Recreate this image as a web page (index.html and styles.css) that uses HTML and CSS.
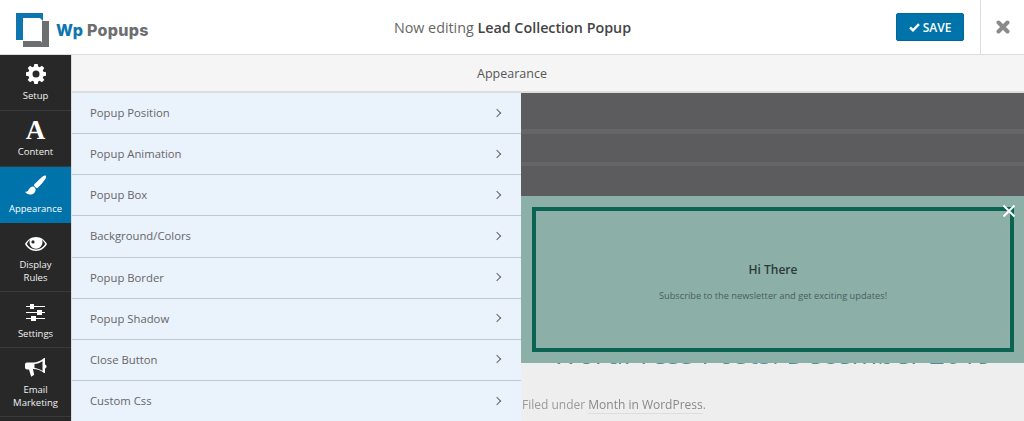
FILE: index.html
```html
<!DOCTYPE html>
<html lang="en">
<head>
<meta charset="utf-8">
<title>Wp Popups</title>
<link rel="stylesheet" href="styles.css">
</head>
<body>
<header class="topbar">
  <div class="logo">
    <svg class="logo-mark" width="34" height="34" viewBox="0 0 34 34" aria-hidden="true">
      <path fill="#6d6e70" d="M26 8h7v26H7v-6h17.500l1.500 1.500z"/>
      <path fill="#0f75ae" d="M0 0h27v8l-3-3H7v22H0z"/>
    </svg>
    <span class="logo-text"><span class="logo-wp">Wp</span> Popups</span>
  </div>
  <div class="title">Now editing <strong>Lead Collection Popup</strong></div>
  <button class="save">
    <svg width="11" height="9" viewBox="0 0 11 9" aria-hidden="true"><path fill="none" stroke="#fff" stroke-width="2.400" d="M1 4.500l3 2.800L10 1.200"/></svg>
    SAVE
  </button>
  <div class="close">
    <svg width="14" height="14" viewBox="0 0 14 14" aria-hidden="true"><path fill="none" stroke="#8a8a8a" stroke-width="4" stroke-linecap="round" d="M2.500 2.500l9 9M11.500 2.500l-9 9"/></svg>
  </div>
</header>
<div class="main">
  <nav class="sidebar">
    <a class="nav-item h56">
      <svg width="20" height="20" viewBox="0 0 20 20" aria-hidden="true"><path fill="#fff" fill-rule="evenodd" d="M8.300 0h3.400l.5 2.600 1.500.6 2.200-1.500 2.400 2.400-1.500 2.200.6 1.500 2.600.5v3.400l-2.600.5-.6 1.500 1.500 2.200-2.400 2.400-2.200-1.500-1.500.6-.5 2.600H8.300l-.5-2.600-1.500-.6-2.200 1.500-2.400-2.400 1.500-2.200-.6-1.500L0 11.700V8.300l2.600-.5.6-1.500-1.500-2.200 2.400-2.400 2.200 1.500 1.500-.6zM10 6.500a3.500 3.500 0 1 0 0 7 3.500 3.500 0 0 0 0-7z"/></svg>
      <span>Setup</span>
    </a>
    <a class="nav-item h56">
      <span class="glyph-a">A</span>
      <span>Content</span>
    </a>
    <a class="nav-item h56 active">
      <svg width="22" height="22" viewBox="0 0 22 22" aria-hidden="true"><path fill="#fff" d="M20.500.500c1 .5.800 2-.2 3.500-1.500 2.300-5 6.600-7.300 8.400-.7.500-1.400.6-2 .4L9 10.800c-.1-.8.200-1.400.8-2C12 6.500 16 2.800 18 1.200c1-.7 1.800-1 2.500-.7zM7.600 11.500c1.300-.2 3 1.300 3 3 0 3-2.400 5-5.400 5C3 19.500.800 18.300 0 16.500c1 .5 2.300.2 3-.8 1-1.600 2-3.800 4.600-4.200z"/></svg>
      <span>Appearance</span>
    </a>
    <a class="nav-item h69 display-item">
      <svg width="22" height="14" viewBox="0 0 22 14" aria-hidden="true"><path fill="#fff" fill-rule="evenodd" d="M11 0c4.800 0 8.800 2.800 11 7-2.200 4.200-6.200 7-11 7S2.200 11.200 0 7c2.200-4.200 6.200-7 11-7zM5 2.700A11 11 0 0 0 1.800 7C3.800 10.300 7.100 12.500 11 12.500s7.200-2.200 9.200-5.500A11 11 0 0 0 17 2.700a6.500 6.500 0 1 1-12 0zM8 3.300a1.600 1.600 0 1 0 0 3.200 1.600 1.600 0 0 0 0-3.200z"/></svg>
      <span>Display<br>Rules</span>
    </a>
    <a class="nav-item h56 settings-item">
      <svg width="19" height="17" viewBox="0 0 19 17" aria-hidden="true"><path fill="#fff" d="M0 2h19v1H0zM0 8h19v1H0zM0 14h19v1H0zM4 0h4v5H4zM11 6h5v5h-5zM5 12h5v5H5z"/></svg>
      <span>Settings</span>
    </a>
    <a class="nav-item h69 email-item">
      <svg width="22" height="19" viewBox="0 0 22 19" aria-hidden="true"><path fill="#fff" fill-rule="evenodd" d="M19 0h1v6.500c.9.200 1.500 1 1.500 2s-.6 1.800-1.500 2V15h-1c-3-2.700-7-3.800-11-4v.5l1.200 5.300-3 2-2.200-7.400H2C.8 11.400 0 10.500 0 9.500v-3C0 5.400.8 4.500 2 4.500h6C12 4.300 16 3 19 0zm-1.500 3.200C15 4.800 12 5.800 9.500 6v4c2.500.3 5.500 1.200 8 3z"/></svg>
      <span>Email<br>Marketing</span>
    </a>
  </nav>
  <div class="workspace">
    <h2 class="panel-title">Appearance</h2>
    <div class="split">
      <ul class="rows">
        <li class="row"><span>Popup Position</span><i class="chev"></i></li>
        <li class="row"><span>Popup Animation</span><i class="chev"></i></li>
        <li class="row"><span>Popup Box</span><i class="chev"></i></li>
        <li class="row"><span>Background/Colors</span><i class="chev"></i></li>
        <li class="row"><span>Popup Border</span><i class="chev"></i></li>
        <li class="row"><span>Popup Shadow</span><i class="chev"></i></li>
        <li class="row"><span>Close Button</span><i class="chev"></i></li>
        <li class="row"><span>Custom Css</span><i class="chev"></i></li>
      </ul>
      <section class="preview">
        <div class="shade">
          <div class="stripe"></div>
          <div class="stripe stripe-2"></div>
        </div>
        <div class="page">
          <div class="page-heading">WordPress Posts: December 2019</div>
          <p class="filed">Filed under <a>Month in WordPress</a>.</p>
        </div>
        <div class="popup">
          <div class="popup-box">
            <h3>Hi There</h3>
            <p>Subscribe to the newsletter and get exciting updates!</p>
          </div>
          <svg class="popup-x" width="14" height="14" viewBox="0 0 14 14" aria-hidden="true"><path fill="none" stroke="#fff" stroke-width="2" d="M1.500 1.500l11 11M12.500 1.500l-11 11"/></svg>
        </div>
      </section>
    </div>
  </div>
</div>
</body>
</html>
```
FILE: styles.css
```css
* { box-sizing: border-box; }
html, body { margin: 0; height: 100%; overflow: hidden; }
body { font-family: "Open Sans", "Liberation Sans", sans-serif; background: #fff; color: #555; }

.topbar {
  height: 55px;
  display: flex;
  align-items: center;
  background: #fff;
  border-bottom: 1px solid #ddd;
}
.logo { width: 170px; flex: none; display: flex; align-items: center; padding-left: 16px; gap: 6px; }
.logo-mark { flex: none; margin-top: 6px; }
.logo-text { font: 800 16px "Inter", "Liberation Sans", sans-serif; color: #6d6e70; white-space: nowrap; margin-top: 6px; letter-spacing: 0.3px; }
.logo-wp { color: #0f75ae; }
.title { flex: 1; text-align: center; font-size: 14.300px; color: #666; padding-right: 41px; }
.title strong { font-weight: 600; color: #444; }
.save {
  width: 68px; height: 28px; margin-right: 16px; flex: none;
  display: flex; align-items: center; justify-content: center; gap: 3px;
  background: #0073aa; color: #fff; border: 1px solid #006799; border-radius: 2px;
  font: 600 12px "Open Sans", sans-serif; padding: 0;
}
.close { width: 44px; height: 54px; flex: none; border-left: 1px solid #ddd; display: flex; align-items: center; justify-content: center; }

.main { display: flex; height: 366px; }
.sidebar { width: 72px; flex: none; background: #282828; border-right: 1px solid #dcdcdc; }
.nav-item {
  display: flex; flex-direction: column; align-items: center; justify-content: center; gap: 5px;
  color: #f1f1f1; font-size: 9.500px; line-height: 13px; text-align: center;
  border-bottom: 1px solid #3a3a3a;
}
.nav-item.h56 { height: 56px; }
.nav-item.h69 { height: 69px; }
.nav-item.active { background: #0073aa; color: #fff; border-bottom-color: #0073aa; }
.display-item { padding-top: 6px; gap: 7px; }
.settings-item { padding-top: 5px; gap: 6px; }
.email-item { padding-top: 3px; gap: 6px; }
.glyph-a { font: 700 27px/20px "Liberation Serif", serif; color: #fff; }

.workspace { flex: 1; display: flex; flex-direction: column; min-width: 0; }
.panel-title {
  margin: 0; height: 38px; flex: none; display: flex; align-items: center; justify-content: center;
  background: #f5f5f5; border-bottom: 2px solid #ddd; padding-right: 72px;
  font-size: 12.500px; font-weight: 400; color: #555;
}
.split { flex: 1; display: flex; min-height: 0; }
.rows { width: 449px; flex: none; list-style: none; margin: 0; padding: 0; background: #eaf2fc; }
.row {
  height: 41.150px; display: flex; align-items: center; justify-content: space-between;
  padding: 0 21px 1px 18px; border-bottom: 1px solid #c0c8d6;
  font-size: 11.300px; color: #666;
}
.chev { width: 6px; height: 6px; border-top: 1px solid #666; border-right: 1px solid #666; transform: rotate(45deg); }

.preview { flex: 1; position: relative; background: #eee; overflow: hidden; }
.shade { height: 103px; background: #5c5c5e; position: relative; }
.stripe { position: absolute; left: 0; right: 0; top: 36px; height: 5px; background: #666668; }
.stripe-2 { top: 69px; height: 4px; }
.page { height: 225px; overflow: hidden; }
.page-heading { margin-top: 138px; font-size: 28px; line-height: 38px; color: #4b8e9c; text-align: center; white-space: nowrap; filter: blur(0.5px); }
.filed { margin: 24px 0 0 1px; font-size: 12px; color: #999; filter: blur(0.3px); }
.filed a { color: #888; border-bottom: 1px solid #ddd; }
.popup { position: absolute; left: 0; right: 0; top: 103px; height: 167px; background: #8cb0a8; padding: 11px 10px 11px 11px; }
.popup-box {
  height: 145px; border: 4px solid #0b6352; padding-top: 3px;
  display: flex; flex-direction: column; align-items: center; justify-content: center; gap: 11px;
}
.popup-box h3 { margin: 0; font-size: 12px; font-weight: 600; color: #2a3a3a; }
.popup-box p { margin: 0; font-size: 9.250px; color: #4a5c5c; }
.popup-x { position: absolute; top: 8px; right: 8px; }
```
